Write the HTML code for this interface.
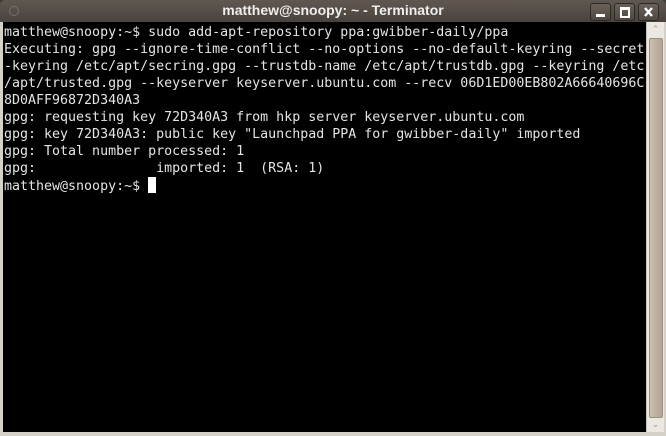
<!DOCTYPE html><html><head><style>
body{margin:0;width:666px;height:436px;overflow:hidden;background:#3c3b37;position:relative;font-family:"Liberation Sans",sans-serif}
#title{position:absolute;left:0;top:0;width:666px;height:22px;background:linear-gradient(#5f5750,#4a433d);border-radius:5px 5px 0 0;color:#eee;font-weight:bold;font-size:14px;text-align:center;line-height:21px}
#term{position:absolute;left:3px;top:22px;width:643px;height:410px;background:#000}
pre{margin:0;position:absolute;left:4px;top:24px;font-family:"DejaVu Sans Mono","Liberation Mono",monospace;font-size:13.3px;line-height:17px;color:#e4e4e4;letter-spacing:0}
#sb{position:absolute;left:646px;top:22px;width:17px;height:410px;background:#ebe7e1;border-left:1px solid #c9c2b8}
#thumb{position:absolute;left:2px;top:16px;width:12px;height:378px;background:linear-gradient(90deg,#cabfb1,#b3a593);border:1px solid #9d9080;border-radius:2px}
#frame{position:absolute;left:0;top:22px;width:3px;height:414px;background:#d5d0c8}
#frameR{position:absolute;left:663px;top:22px;width:3px;height:414px;background:#d5d0c8}
#frameB{position:absolute;left:0;top:432px;width:666px;height:4px;background:#d5d0c8}
.btn{position:absolute;top:3px;width:19px;height:16px;border:1px solid #2d2925;border-radius:3px;background:linear-gradient(#6a625a,#4f4842)}
.cur{display:inline-block;width:8px;height:16px;background:#fff;vertical-align:-3px}
</style></head><body>
<div id="title">matthew@snoopy: ~ - Terminator</div>
<div style="position:absolute;left:9px;top:6px;width:8px;height:8px;border-radius:50%;border:1px solid #7a726a"></div>
<div class="btn" style="left:590px"><div style="position:absolute;left:5px;top:10px;width:9px;height:3px;background:#fff"></div></div>
<div class="btn" style="left:614px"><div style="position:absolute;left:5px;top:3px;width:6px;height:6px;border:2px solid #fff;border-top-width:3px"></div></div>
<div class="btn" style="left:638px"><svg width="19" height="16" style="position:absolute;left:0;top:0"><path d="M6 4L13 12M13 4L6 12" stroke="#fff" stroke-width="2.4"/></svg></div>
<div id="frame"></div><div id="frameR"></div><div id="frameB"></div>
<div id="term"></div>
<div id="sb"><div style="text-align:center;color:#a89c8d;font-size:9px;line-height:14px">&#8963;</div><div id="thumb"></div><div style="position:absolute;bottom:2px;width:17px;text-align:center;color:#a89c8d;font-size:9px">&#8964;</div></div>
<pre>matthew@snoopy:~$ sudo add-apt-repository ppa:gwibber-daily/ppa
Executing: gpg --ignore-time-conflict --no-options --no-default-keyring --secret
-keyring /etc/apt/secring.gpg --trustdb-name /etc/apt/trustdb.gpg --keyring /etc
/apt/trusted.gpg --keyserver keyserver.ubuntu.com --recv 06D1ED00EB802A66640696C
8D0AFF96872D340A3
gpg: requesting key 72D340A3 from hkp server keyserver.ubuntu.com
gpg: key 72D340A3: public key "Launchpad PPA for gwibber-daily" imported
gpg: Total number processed: 1
gpg:               imported: 1  (RSA: 1)
matthew@snoopy:~$ <span class="cur"></span></pre>
</body></html>
